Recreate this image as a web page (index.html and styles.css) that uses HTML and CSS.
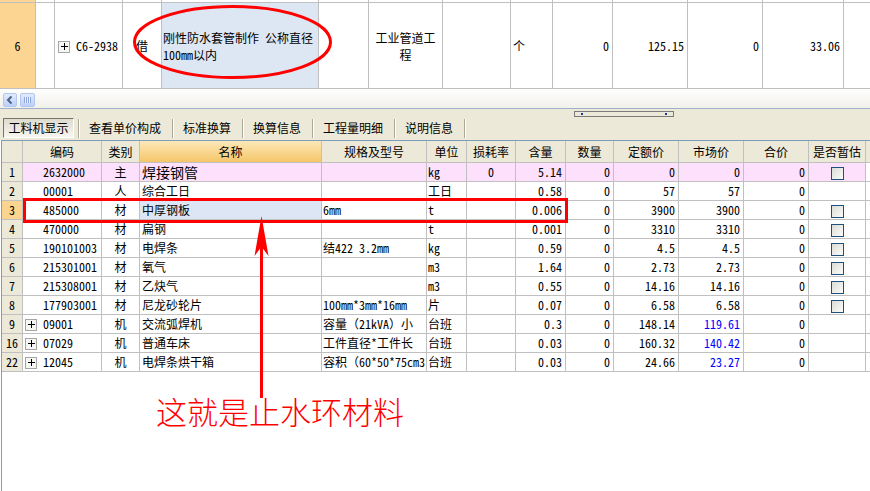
FILE: index.html
```html
<!DOCTYPE html>
<html lang="zh-CN">
<head>
  <meta charset="UTF-8">
  <title>工料机显示</title>
  <link rel="stylesheet" href="styles.css">
</head>
<body>
  <div class="top-grid">
    <table class="grid grid-top">
      <colgroup>
        <col><col><col><col><col><col><col><col><col><col><col><col><col><col>
      </colgroup>
      <tr class="prev-row">
        <td class="rn"></td><td></td><td></td><td></td><td></td><td></td><td></td>
        <td></td><td></td><td></td><td></td><td></td><td></td><td></td>
      </tr>
      <tr class="item-row">
        <td class="rn c">6</td>
        <td></td>
        <td class="code"><span class="tog"></span>C6-2938</td>
        <td class="c">借</td>
        <td class="sel">刚性防水套管制作 公称直径<br>100mm以内</td>
        <td></td>
        <td class="c">工业管道工<br>程</td>
        <td></td>
        <td>个</td>
        <td class="r">0</td>
        <td class="r">125.15</td>
        <td class="r">0</td>
        <td class="r">33.06</td>
        <td></td>
      </tr>
    </table>
  </div>

  <div class="hscroll">
    <span class="sb-btn">
      <svg width="14" height="14" viewBox="0 0 14 14"><path d="M8.5 3.5 L5 7 L8.5 10.5" fill="none" stroke="#4d6185" stroke-width="2"/></svg>
    </span>
    <span class="sb-thumb"><span class="grip-lines"></span></span>
  </div>

  <div class="tabbar">
    <div class="splitter"><span class="split-grip"></span></div>
    <div class="tabs">
      <span class="tab active">工料机显示</span>
      <span class="sep"></span>
      <span class="tab">查看单价构成</span>
      <span class="sep"></span>
      <span class="tab">标准换算</span>
      <span class="sep"></span>
      <span class="tab">换算信息</span>
      <span class="sep"></span>
      <span class="tab">工程量明细</span>
      <span class="sep"></span>
      <span class="tab">说明信息</span>
      <span class="sep"></span>
    </div>
  </div>

  <div class="detail">
    <table class="grid grid-detail">
      <colgroup>
        <col><col><col><col><col><col><col><col><col><col><col><col><col><col>
      </colgroup>
      <thead>
        <tr>
          <th></th>
          <th>编码</th>
          <th>类别</th>
          <th class="sorted">名称</th>
          <th>规格及型号</th>
          <th>单位</th>
          <th>损耗率</th>
          <th>含量</th>
          <th>数量</th>
          <th>定额价</th>
          <th>市场价</th>
          <th>合价</th>
          <th>是否暂估</th>
          <th class="fill"></th>
        </tr>
      </thead>
      <tbody>
        <tr class="main-mat">
          <td class="rn">1</td><td class="code">2632000</td><td class="c">主</td>
          <td class="name big">焊接钢管</td><td class="spec"></td><td class="unit">kg</td>
          <td class="c">0</td><td class="r">5.14</td><td class="r">0</td><td class="r">0</td>
          <td class="r">0</td><td class="r">0</td><td class="c"><span class="chk"></span></td><td class="fill"></td>
        </tr>
        <tr>
          <td class="rn">2</td><td class="code">00001</td><td class="c">人</td>
          <td class="name">综合工日</td><td class="spec"></td><td class="unit">工日</td>
          <td></td><td class="r">0.58</td><td class="r">0</td><td class="r">57</td>
          <td class="r">57</td><td class="r">0</td><td></td><td class="fill"></td>
        </tr>
        <tr>
          <td class="rn cur">3</td><td class="code">485000</td><td class="c">材</td>
          <td class="name sel">中厚钢板</td><td class="spec">6mm</td><td class="unit">t</td>
          <td></td><td class="r">0.006</td><td class="r">0</td><td class="r">3900</td>
          <td class="r">3900</td><td class="r">0</td><td class="c"><span class="chk"></span></td><td class="fill"></td>
        </tr>
        <tr>
          <td class="rn">4</td><td class="code">470000</td><td class="c">材</td>
          <td class="name">扁钢</td><td class="spec"></td><td class="unit">t</td>
          <td></td><td class="r">0.001</td><td class="r">0</td><td class="r">3310</td>
          <td class="r">3310</td><td class="r">0</td><td class="c"><span class="chk"></span></td><td class="fill"></td>
        </tr>
        <tr>
          <td class="rn">5</td><td class="code">190101003</td><td class="c">材</td>
          <td class="name">电焊条</td><td class="spec">结422 3.2mm</td><td class="unit">kg</td>
          <td></td><td class="r">0.59</td><td class="r">0</td><td class="r">4.5</td>
          <td class="r">4.5</td><td class="r">0</td><td class="c"><span class="chk"></span></td><td class="fill"></td>
        </tr>
        <tr>
          <td class="rn">6</td><td class="code">215301001</td><td class="c">材</td>
          <td class="name">氧气</td><td class="spec"></td><td class="unit">m3</td>
          <td></td><td class="r">1.64</td><td class="r">0</td><td class="r">2.73</td>
          <td class="r">2.73</td><td class="r">0</td><td class="c"><span class="chk"></span></td><td class="fill"></td>
        </tr>
        <tr>
          <td class="rn">7</td><td class="code">215308001</td><td class="c">材</td>
          <td class="name">乙炔气</td><td class="spec"></td><td class="unit">m3</td>
          <td></td><td class="r">0.55</td><td class="r">0</td><td class="r">14.16</td>
          <td class="r">14.16</td><td class="r">0</td><td class="c"><span class="chk"></span></td><td class="fill"></td>
        </tr>
        <tr>
          <td class="rn">8</td><td class="code">177903001</td><td class="c">材</td>
          <td class="name">尼龙砂轮片</td><td class="spec">100mm*3mm*16mm</td><td class="unit">片</td>
          <td></td><td class="r">0.07</td><td class="r">0</td><td class="r">6.58</td>
          <td class="r">6.58</td><td class="r">0</td><td class="c"><span class="chk"></span></td><td class="fill"></td>
        </tr>
        <tr>
          <td class="rn">9</td><td class="code has-tog"><span class="tog"></span>09001</td><td class="c">机</td>
          <td class="name">交流弧焊机</td><td class="spec">容量（21kVA）小</td><td class="unit">台班</td>
          <td></td><td class="r">0.3</td><td class="r">0</td><td class="r">148.14</td>
          <td class="r market">119.61</td><td class="r">0</td><td></td><td class="fill"></td>
        </tr>
        <tr>
          <td class="rn">16</td><td class="code has-tog"><span class="tog"></span>07029</td><td class="c">机</td>
          <td class="name">普通车床</td><td class="spec">工件直径*工件长</td><td class="unit">台班</td>
          <td></td><td class="r">0.03</td><td class="r">0</td><td class="r">160.32</td>
          <td class="r market">140.42</td><td class="r">0</td><td></td><td class="fill"></td>
        </tr>
        <tr>
          <td class="rn">22</td><td class="code has-tog"><span class="tog"></span>12045</td><td class="c">机</td>
          <td class="name">电焊条烘干箱</td><td class="spec">容积（60*50*75cm3</td><td class="unit">台班</td>
          <td></td><td class="r">0.03</td><td class="r">0</td><td class="r">24.66</td>
          <td class="r market">23.27</td><td class="r">0</td><td></td><td class="fill"></td>
        </tr>
      </tbody>
    </table>

    <p class="note">这就是止水环材料</p>
  </div>

  <!-- red hand-drawn marks over the screenshot -->
  <svg class="marks" width="870" height="491" viewBox="0 0 870 491">
    <ellipse cx="232.5" cy="42" rx="98" ry="35.5" fill="none" stroke="#ff0000" stroke-width="3"/>
    <rect x="24.5" y="199.5" width="542" height="22" fill="none" stroke="#ff0000" stroke-width="3" shape-rendering="crispEdges"/>
    <rect x="260" y="245" width="3" height="153" fill="#ff0000"/>
    <path d="M261.5 216 L268.5 256 L262.5 248 L260.5 248 L254.5 256 Z" fill="#ff0000"/>
  </svg>
</body>
</html>
```

FILE: styles.css
```css
* {
  box-sizing: border-box;
  margin: 0;
  padding: 0;
}

body {
  position: relative;
  width: 870px;
  height: 491px;
  overflow: hidden;
  display: flex;
  flex-direction: column;
  background: #fff;
  color: #000;
  font-family: "Noto Sans Mono CJK SC", "Noto Sans CJK SC", monospace;
  font-size: 12px;
}

/* ---- shared grid ---- */

.grid {
  border-collapse: separate;
  border-spacing: 0;
  table-layout: fixed;
}

.grid td,
.grid th {
  border-right: 1px solid #c0c0c0;
  border-bottom: 1px solid #c0c0c0;
  padding: 0 2px;
  white-space: nowrap;
  overflow: hidden;
  font-weight: normal;
  text-align: left;
  vertical-align: middle;
}

.grid .c { text-align: center; }
.grid .r { text-align: right; padding-right: 3px; }

.tog {
  display: inline-block;
  width: 12px;
  height: 12px;
  margin-right: 6px;
  vertical-align: -2px;
  border: 1px solid #a5a5a5;
  background:
    linear-gradient(#000, #000) 2px 4px / 7px 1px no-repeat,
    linear-gradient(#000, #000) 5px 1px / 1px 7px no-repeat,
    #f6f6f2;
}

/* ---- top (quota) grid ---- */

.top-grid {
  height: 89px;
  overflow: hidden;
}

.grid-top {
  width: 884px;
}

.grid-top col:nth-child(1)  { width: 36px; }
.grid-top col:nth-child(2)  { width: 19px; }
.grid-top col:nth-child(3)  { width: 68px; }
.grid-top col:nth-child(4)  { width: 39px; }
.grid-top col:nth-child(5)  { width: 157px; }
.grid-top col:nth-child(6)  { width: 50px; }
.grid-top col:nth-child(7)  { width: 74px; }
.grid-top col:nth-child(8)  { width: 68px; }
.grid-top col:nth-child(9)  { width: 42px; }
.grid-top col:nth-child(10) { width: 60px; }
.grid-top col:nth-child(11) { width: 75px; }
.grid-top col:nth-child(12) { width: 75px; }
.grid-top col:nth-child(13) { width: 81px; }
.grid-top col:nth-child(14) { width: 40px; }

.grid-top .prev-row td {
  height: 3px;
  padding: 0;
  font-size: 0;
  line-height: 0;
}

.grid-top .item-row td {
  height: 86px;
  line-height: 17px;
}

.grid-top .rn {
  background: #fdd592;
}

.grid-top .code {
  padding-left: 3px;
}

.grid-top .sel {
  background: #dde7f3;
  padding-left: 1px;
}

/* ---- horizontal scroll strip ---- */

.hscroll {
  height: 20px;
  display: flex;
  gap: 3px;
  padding: 4px 0 0 3px;
  background: linear-gradient(#fefefd, #f1f0ea);
  border-bottom: 1px solid #9fb2cc;
}

.sb-btn,
.sb-thumb {
  width: 14px;
  height: 14px;
  border: 1px solid #b3c6ee;
  border-radius: 2px;
  background: linear-gradient(#e3ebfd, #bcd0fa);
}

.sb-btn svg {
  display: block;
  margin: -1px;
}

.sb-thumb {
  width: 15px;
  display: flex;
  align-items: center;
  justify-content: center;
}

.grip-lines {
  width: 7px;
  height: 6px;
  background: repeating-linear-gradient(90deg, #8ca4d8 0 1px, #eef3fe 1px 2px);
}

/* ---- tab bar ---- */

.tabbar {
  height: 31px;
  background: #ece9d8;
}

.splitter {
  height: 9px;
  padding: 2px 0 0 574px;
}

.split-grip {
  display: block;
  width: 100px;
  height: 6px;
  border: 1px solid #7b7b7b;
  background:
    linear-gradient(#1b33a0, #1b33a0) 6px 1px / 2px 2px no-repeat,
    linear-gradient(#1b33a0, #1b33a0) 90px 1px / 2px 2px no-repeat,
    #ece9d8;
}

.tabs {
  display: flex;
  height: 20px;
  padding-left: 3px;
}

.tab {
  display: flex;
  align-items: center;
  padding: 0 11px 0 9px;
  line-height: 14px;
}

.tab.active {
  width: 71px;
  margin-right: 4px;
  padding: 0;
  justify-content: center;
  border: 1px solid;
  border-color: #77756a #ffffff #ffffff #77756a;
  background: linear-gradient(#dedbcf, #f6f5f0);
}

.sep {
  width: 2px;
  height: 19px;
  margin-top: 1px;
  border-left: 1px solid #aca899;
  border-right: 1px solid #fff;
}

/* ---- detail (resources) grid ---- */

.detail {
  flex: 1;
  margin-left: 1px;
  border-left: 1px solid #7f9db9;
  border-top: 1px solid #7f9db9;
}

.grid-detail {
  width: 868px;
}

.grid-detail col:nth-child(1)  { width: 21px; }
.grid-detail col:nth-child(2)  { width: 79px; }
.grid-detail col:nth-child(3)  { width: 38px; }
.grid-detail col:nth-child(4)  { width: 182px; }
.grid-detail col:nth-child(5)  { width: 105px; }
.grid-detail col:nth-child(6)  { width: 40px; }
.grid-detail col:nth-child(7)  { width: 49px; }
.grid-detail col:nth-child(8)  { width: 50px; }
.grid-detail col:nth-child(9)  { width: 48px; }
.grid-detail col:nth-child(10) { width: 65px; }
.grid-detail col:nth-child(11) { width: 65px; }
.grid-detail col:nth-child(12) { width: 65px; }
.grid-detail col:nth-child(13) { width: 57px; }
.grid-detail col:nth-child(14) { width: 4px; }

.grid-detail th {
  height: 22px;
  background: #ece9d8;
  text-align: center;
  line-height: 18px;
}

.grid-detail th.sorted {
  background: linear-gradient(#fce8b8, #f5c66a);
}

.grid-detail td {
  height: 19px;
  line-height: 18px;
}

.grid-detail .fill {
  border-right: none;
  padding: 0;
}

.grid-detail td.rn {
  background: #ece9d8;
  text-align: center;
  padding: 0;
}

.grid-detail td.rn.cur {
  background: #fbd48f;
}

.grid-detail .code {
  padding-left: 20px;
}

.grid-detail .code.has-tog {
  padding-left: 2px;
}

.grid-detail .spec,
.grid-detail .unit {
  padding-left: 1px;
}

.grid-detail .name.big {
  font-size: 14px;
}

.grid-detail .sel {
  background: #dce6f4;
}

.main-mat td:not(.rn):not(.fill) {
  background: #fde0fc;
}

.market {
  color: #0000ff;
  font-weight: bold;
}

.chk {
  display: inline-block;
  width: 13px;
  height: 13px;
  vertical-align: middle;
  border: 1px solid #1c5180;
  background: linear-gradient(135deg, #dcdcd6, #fbfbf9);
}

.note {
  margin: 23px 0 0 154px;
  color: #ff0000;
  font-family: "Noto Sans CJK SC", sans-serif;
  font-weight: 300;
  font-size: 31px;
  line-height: 31px;
}

/* annotation marks drawn over everything */
.marks {
  position: absolute;
  top: 0;
  left: 0;
  pointer-events: none;
}
```
